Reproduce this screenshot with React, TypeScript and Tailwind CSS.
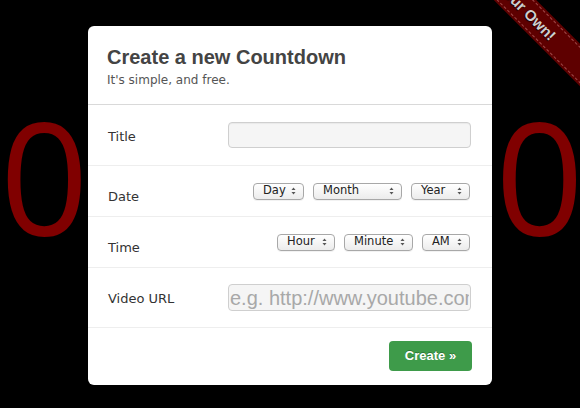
import React from "react";

const sans = { fontFamily: '"Liberation Sans", Arial, sans-serif' };
const lucida = { fontFamily: '"DejaVu Sans", "Liberation Sans", sans-serif' };

function Arrows() {
  return (
    <svg width="5" height="8" viewBox="0 0 5 8" className="shrink-0">
      <polygon points="0.5,3 2.5,0.5 4.5,3" fill="#555" />
      <polygon points="0.5,5 2.5,7.5 4.5,5" fill="#555" />
    </svg>
  );
}

function Sel({ label, w }: { label: string; w: string }) {
  return (
    <div
      className={`${w} h-[17px] flex items-center justify-between pl-[9px] pr-[7px] rounded-[4px] border border-[#a8a8a8] bg-gradient-to-b from-white to-[#ececec] shadow-[0_1px_0_rgba(0,0,0,0.05)] text-[11.5px] text-[#222] leading-none`}
      style={lucida}
    >
      <span>{label}</span>
      <Arrows />
    </div>
  );
}

export default function App() {
  return (
    <div className="relative w-[580px] h-[408px] bg-black overflow-hidden">
      <div
        className="flex justify-between items-start pt-[97px] text-[155px] leading-none text-[#800000]"
        style={{ fontFamily: '"Open Sans", sans-serif' }}
      >
        <span className="ml-[0px]">0</span>
        <span className="mr-[-4px]">0</span>
      </div>

      <div className="absolute left-[88px] top-[26px] w-[404px] h-[359px] bg-white rounded-[6px] flex flex-col">
        <div className="h-[79px] shrink-0 border-b border-[#d9d9d9] px-[19px] pt-[20px]">
          <h1 className="text-[20px] leading-[22px] font-bold text-[#444]" style={sans}>
            Create a new Countdown
          </h1>
          <p className="mt-[4px] text-[12px] leading-[16px] text-[#555]" style={lucida}>
            It's simple, and free.
          </p>
        </div>

        <div className="h-[61px] shrink-0 border-b border-[#eee] flex items-center pl-[20px] pr-[21px]">
          <span className="text-[13px] text-[#333] pt-[3px]" style={lucida}>Title</span>
          <div className="ml-auto w-[243px] h-[26px] rounded-[4px] border border-[#cfcfcf] bg-[#f5f5f5] shadow-[inset_0_1px_1px_rgba(0,0,0,0.05)]" />
        </div>

        <div className="h-[51px] shrink-0 border-b border-[#eee] flex items-center pl-[20px] pr-[22px]">
          <span className="text-[13px] text-[#333] pt-[12px]" style={lucida}>Date</span>
          <div className="ml-auto flex gap-[9px]">
            <Sel label="Day" w="w-[51px]" />
            <Sel label="Month" w="w-[89px]" />
            <Sel label="Year" w="w-[59px]" />
          </div>
        </div>

        <div className="h-[51px] shrink-0 border-b border-[#eee] flex items-center pl-[20px] pr-[22px]">
          <span className="text-[13px] text-[#333] pt-[12px]" style={lucida}>Time</span>
          <div className="ml-auto flex gap-[9px]">
            <Sel label="Hour" w="w-[58px]" />
            <Sel label="Minute" w="w-[69px]" />
            <Sel label="AM" w="w-[48px]" />
          </div>
        </div>

        <div className="h-[60px] shrink-0 border-b border-[#eee] flex items-center pl-[20px] pr-[21px]">
          <span className="text-[13px] text-[#333] pt-[2px]" style={lucida}>Video URL</span>
          <input
            className="ml-auto w-[243px] h-[27px] rounded-[4px] border border-[#cfcfcf] bg-[#f5f5f5] px-[1px] text-[20px] outline-none placeholder:text-[#a8a8a8]"
            style={sans}
            placeholder="e.g. http://www.youtube.com/watch"
          />
        </div>

        <div className="flex-1 flex items-center justify-end pr-[20px] pb-[2px]">
          <button
            className="w-[83px] h-[30px] rounded-[4px] bg-[#3e9b4a] text-white text-[13px] font-bold [text-shadow:0_-1px_0_rgba(0,0,0,0.25)]"
            style={sans}
          >
            Create »
          </button>
        </div>
      </div>

      <div className="absolute left-[392px] top-[-18px] w-[240px] h-[30px] rotate-45 bg-[#5e0000] shadow-[0_0_8px_2px_rgba(0,0,0,0.9)] flex items-center justify-center">
        <div className="absolute inset-x-0 top-[2px] border-t border-dashed border-[#a04848]" />
        <div className="absolute inset-x-0 bottom-[2px] border-b border-dashed border-[#a04848]" />
        <span className="text-[#cfcfcf] font-bold text-[15px] [text-shadow:0_1px_1px_rgba(0,0,0,0.8)]" style={sans}>
          Make Your Own!
        </span>
      </div>
    </div>
  );
}
